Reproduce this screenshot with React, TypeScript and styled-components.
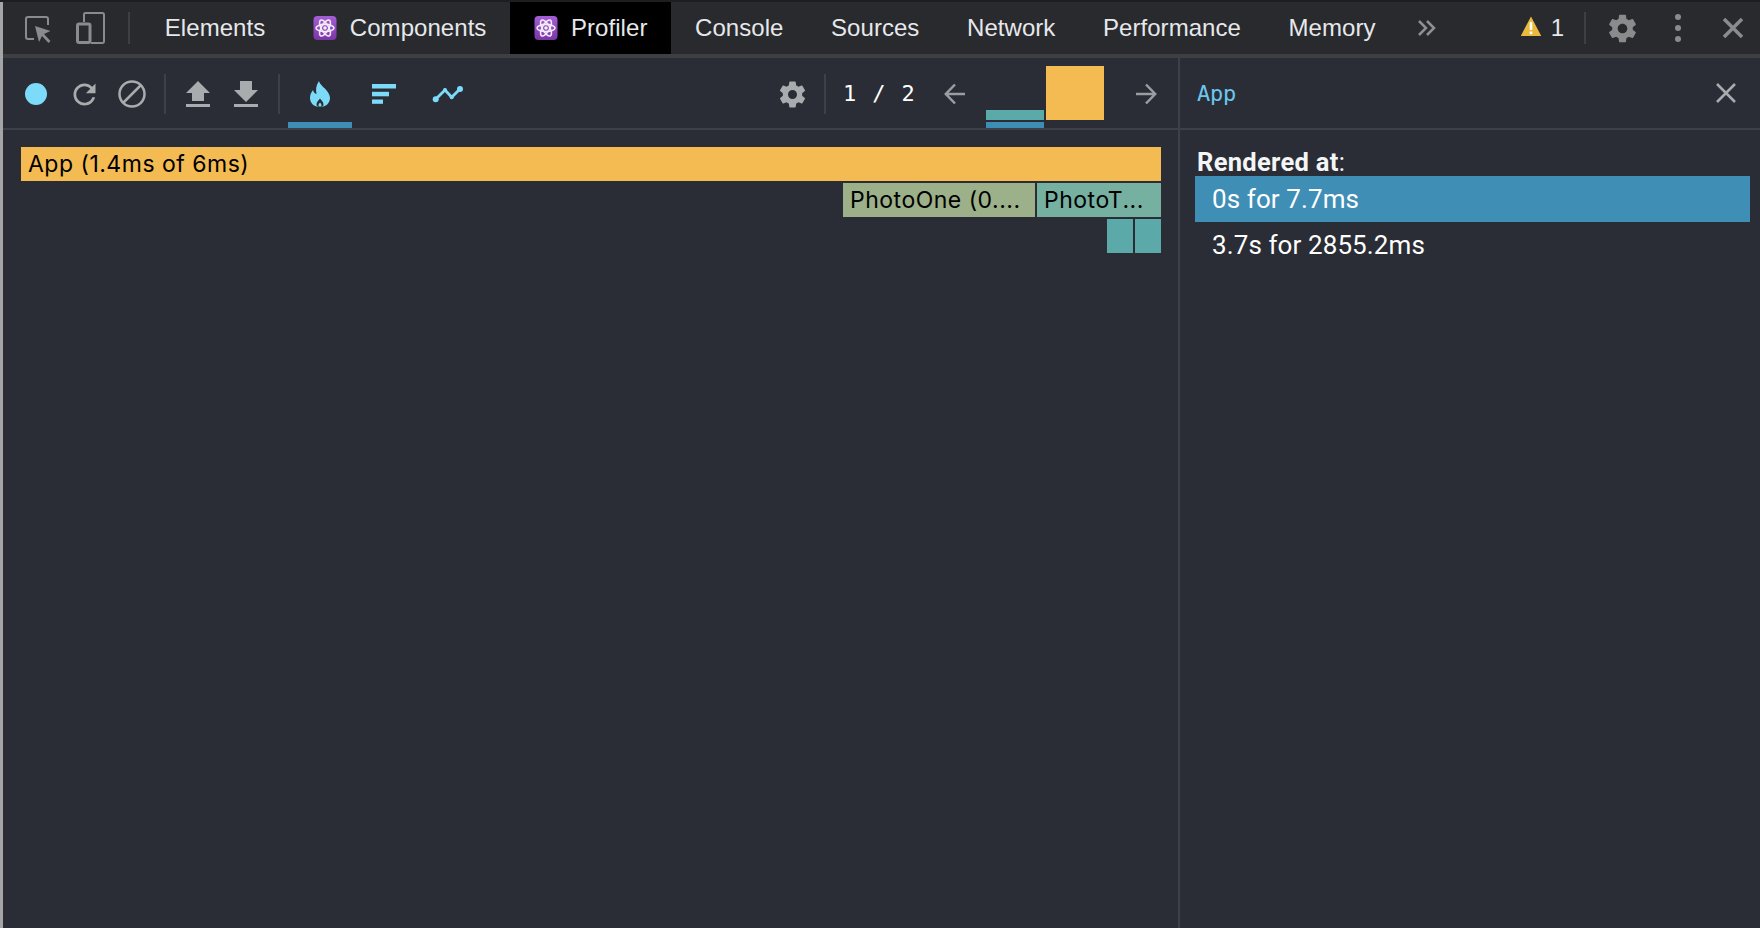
import React from "react";
import styled, { createGlobalStyle } from "styled-components";

const Global = createGlobalStyle`
  html, body { margin: 0; padding: 0; background: #2a2d35; overflow: hidden; }
  * { box-sizing: border-box; }
`;

const Page = styled.div`
  width: 1760px;
  height: 928px;
  display: flex;
  flex-direction: column;
  background: #1d1e20;
  padding-top: 2px;
`;
const Frame = styled.div`
  flex: 1;
  min-height: 0;
  display: flex;
  flex-direction: column;
  border-left: 3px solid #a4a5a7;
`;
const TabBar = styled.div`
  height: 56px;
  flex: none;
  display: flex;
  align-items: stretch;
  padding-left: 7px;
  background: #292a2d;
  border-bottom: 4px solid #3d3f43;
`;
const Slot = styled.div<{ $w: number }>`
  width: ${(p) => p.$w}px;
  flex: none;
  display: flex;
  align-items: center;
  justify-content: center;
`;
const ToolSlot = styled(Slot)`
  padding-top: 2px;
`;
const TabSep = styled.div`
  width: 2px;
  height: 32px;
  align-self: center;
  background: #3d3f43;
  margin: 0 11px 0 10px;
  flex: none;
`;
const Tab = styled.div<{ $active?: boolean }>`
  display: flex;
  align-items: center;
  gap: 13px;
  padding: 0 23.8px;
  background: ${(p) => (p.$active ? "#000" : "transparent")};
  color: #e6e8eb;
  font: 24px "Liberation Sans", Arial, sans-serif;
  letter-spacing: 0.05px;
  white-space: nowrap;
  flex: none;
`;
const Grow = styled.div`
  flex: 1;
`;
const WarnGroup = styled.div`
  display: flex;
  align-items: center;
  gap: 10px;
  color: #e6e8eb;
  font: 24px "Liberation Sans", Arial, sans-serif;
`;
const RightTabSep = styled.div`
  width: 2px;
  height: 32px;
  align-self: center;
  background: #3d3f43;
  margin: 0 8px 0 20px;
  flex: none;
`;
const Body = styled.div`
  flex: 1;
  min-height: 0;
  display: flex;
  background: #2a2d35;
`;
const LeftPane = styled.div`
  width: 1177px;
  flex: none;
  display: flex;
  flex-direction: column;
  border-right: 2px solid #3d4047;
`;
const RightPane = styled.div`
  flex: 1;
  min-width: 0;
  display: flex;
  flex-direction: column;
`;
const Toolbar = styled.div`
  height: 72px;
  flex: none;
  display: flex;
  align-items: stretch;
  padding-left: 9px;
  border-bottom: 2px solid #3d4047;
`;
const ToolSep = styled.div`
  width: 2px;
  height: 40px;
  margin: 16px 8px 0;
  background: #3d4047;
  flex: none;
`;
const ViewTab = styled.div<{ $active?: boolean }>`
  width: 64px;
  flex: none;
  display: flex;
  align-items: center;
  justify-content: center;
  padding-top: 8px;
  border-bottom: 6px solid ${(p) => (p.$active ? "#3d8eb5" : "transparent")};
`;
const Counter = styled.div`
  margin-left: 9px;
  width: 88px;
  align-self: center;
  color: #fff;
  font: 22px "DejaVu Sans Mono", monospace;
  letter-spacing: -0.6px;
  word-spacing: 4px;
  white-space: pre;
`;
const Commits = styled.div`
  display: flex;
  gap: 2px;
  margin: 0 18px 0 7px;
  flex: none;
`;
const Commit = styled.div<{ $selected?: boolean }>`
  width: 58px;
  display: flex;
  flex-direction: column;
  justify-content: flex-end;
  border-bottom: 6px solid ${(p) => (p.$selected ? "#3d8eb5" : "transparent")};
  padding-bottom: 2px;
`;
const CommitBar = styled.div<{ $h: number; $c: string }>`
  height: ${(p) => p.$h}px;
  background: ${(p) => p.$c};
`;
const Chart = styled.div`
  flex: 1;
  padding: 17px 17px 0 18px;
  display: flex;
  flex-direction: column;
  gap: 2px;
`;
const FlameRow = styled.div`
  display: flex;
  justify-content: flex-end;
  gap: 2px;
`;
const Flame = styled.div<{ $w: number; $c: string }>`
  width: ${(p) => p.$w}px;
  height: 34px;
  flex: none;
  background: ${(p) => p.$c};
  color: #000;
  padding-left: 7px;
  font: 23px/34px Inter, "Liberation Sans", sans-serif;
  letter-spacing: 0.5px;
  white-space: nowrap;
  overflow: hidden;
`;
const PanelHead = styled.div`
  height: 72px;
  flex: none;
  display: flex;
  align-items: center;
  justify-content: space-between;
  padding: 0 24px 0 17px;
  border-bottom: 2px solid #3d4047;
  color: #6cc7ee;
  font: 22px "DejaVu Sans Mono", monospace;
  letter-spacing: -0.3px;
`;
const PanelBody = styled.div`
  padding: 19px 10px 0 15px;
  display: flex;
  flex-direction: column;
`;
const Label = styled.div`
  color: #f4f5f6;
  font: 700 25.5px/27px Roboto, sans-serif;
  letter-spacing: 0.3px;
  padding-left: 2px;
`;
const Colon = styled.span`
  font-weight: 400;
`;
const Rendered = styled.div<{ $selected?: boolean }>`
  height: 46px;
  display: flex;
  align-items: center;
  padding-left: 17px;
  color: #fff;
  background: ${(p) => (p.$selected ? "#3f8eb6" : "transparent")};
  font: 26px Roboto, sans-serif;
  letter-spacing: 0.1px;
`;
const InspectSvg = styled.svg`
  margin: 3px 0 0 4px;
`;
const WarnSvg = styled.svg`
  margin-bottom: 4px;
`;

const gear =
  "M19.43 12.98c.04-.32.07-.64.07-.98s-.03-.66-.07-.98l2.11-1.65c.19-.15.24-.42.12-.64l-2-3.46c-.12-.22-.39-.3-.61-.22l-2.49 1c-.52-.4-1.08-.73-1.69-.98l-.38-2.65C14.46 2.18 14.25 2 14 2h-4c-.25 0-.46.18-.49.42l-.38 2.65c-.61.25-1.17.59-1.69.98l-2.49-1c-.23-.09-.49 0-.61.22l-2 3.46c-.13.22-.07.49.12.64l2.11 1.65c-.04.32-.07.65-.07.98s.03.66.07.98l-2.11 1.65c-.19.15-.24.42-.12.64l2 3.46c.12.22.39.3.61.22l2.49-1c.52.4 1.08.73 1.69.98l.38 2.65c.03.24.24.42.49.42h4c.25 0 .46-.18.49-.42l.38-2.65c.61-.25 1.17-.59 1.69-.98l2.49 1c.23.09.49 0 .61-.22l2-3.46c.12-.22.07-.49-.12-.64l-2.11-1.65zM12 15.5c-1.93 0-3.5-1.57-3.5-3.5s1.57-3.5 3.5-3.5 3.5 1.57 3.5 3.5-1.57 3.5-3.5 3.5z";

const Gear = ({ size, color }: { size: number; color: string }) => (
  <svg width={size} height={size} viewBox="0 0 24 24">
    <path d={gear} fill={color} />
  </svg>
);
const Atom = () => (
  <svg width="24" height="24" viewBox="0 0 24 24">
    <defs>
      <linearGradient id="atomBg" x1="0" y1="0" x2="0" y2="1">
        <stop offset="0" stopColor="#a45fd6" />
        <stop offset="1" stopColor="#7a35a6" />
      </linearGradient>
    </defs>
    <rect x="0.5" y="0" width="23" height="24" rx="4" fill="url(#atomBg)" />
    <g fill="none" stroke="#f3ebf8" strokeWidth="1.6">
      <ellipse cx="12" cy="12" rx="9" ry="3.6" />
      <ellipse cx="12" cy="12" rx="9" ry="3.6" transform="rotate(60 12 12)" />
      <ellipse cx="12" cy="12" rx="9" ry="3.6" transform="rotate(120 12 12)" />
    </g>
    <circle cx="12" cy="12" r="1.8" fill="#f3ebf8" />
  </svg>
);
const Inspect = () => (
  <InspectSvg width="28" height="28" viewBox="0 0 28 28">
    <path d="M9 23H3a2 2 0 0 1-2-2V3a2 2 0 0 1 2-2h18a2 2 0 0 1 2 2v6" fill="none" stroke="#8a8b8d" strokeWidth="2" />
    <path d="M10 10L25.5 15 19 18l6.5 7-2 2L17 20l-3 6z" fill="#8a8b8d" />
  </InspectSvg>
);
const Device = () => (
  <svg width="30" height="32" viewBox="0 0 30 32">
    <path d="M8 10V2.5A1.5 1.5 0 0 1 9.5 1h17A1.5 1.5 0 0 1 28 2.5v27a1.5 1.5 0 0 1-1.500 1.500H15" fill="none" stroke="#8a8b8d" strokeWidth="2" />
    <rect x="1.500" y="12" width="12.500" height="18.500" rx="1.500" fill="none" stroke="#8a8b8d" strokeWidth="3" />
  </svg>
);
const Chevrons = () => (
  <svg width="18" height="16" viewBox="0 0 18 16" fill="none" stroke="#8f9092" strokeWidth="2.5">
    <path d="M1 1l7 7-7 7M9 1l7 7-7 7" />
  </svg>
);
const Warn = () => (
  <WarnSvg width="20" height="20" viewBox="0 0 20 20">
    <path d="M10 0.500L20 19.500a.5.5 0 0 1 0 .5H0a.5.5 0 0 1 0-.5z" fill="#ecb93e" />
    <rect x="8.700" y="6" width="2.600" height="8" fill="#fff" />
    <rect x="8.700" y="15.500" width="2.600" height="2.600" fill="#fff" />
  </WarnSvg>
);
const Dots = () => (
  <svg width="6" height="28" viewBox="0 0 6 28" fill="#8a8b8d">
    <circle cx="3" cy="3" r="3" />
    <circle cx="3" cy="14" r="3" />
    <circle cx="3" cy="25" r="3" />
  </svg>
);
const Cross = ({ size, color, sw }: { size: number; color: string; sw: number }) => (
  <svg width={size} height={size} viewBox={`0 0 ${size} ${size}`} fill="none" stroke={color} strokeWidth={sw}>
    <path d={`M1 1L${size - 1} ${size - 1}M${size - 1} 1L1 ${size - 1}`} />
  </svg>
);
const Record = () => (
  <svg width="22" height="22" viewBox="0 0 22 22">
    <circle cx="11" cy="11" r="11" fill="#7ddbfa" />
  </svg>
);
const Reload = () => (
  <svg width="33" height="33" viewBox="0 0 24 24">
    <path
      fill="#a9acaf"
      d="M17.65 6.35C16.2 4.9 14.21 4 12 4c-4.42 0-7.99 3.58-7.99 8s3.57 8 7.99 8c3.73 0 6.84-2.55 7.73-6h-2.08c-.82 2.33-3.04 4-5.65 4-3.31 0-6-2.69-6-6s2.69-6 6-6c1.66 0 3.14.69 4.22 1.78L13 11h7V4l-2.35 2.35z"
    />
  </svg>
);
const Stop = () => (
  <svg width="28" height="28" viewBox="0 0 28 28" fill="none" stroke="#a9acaf" strokeWidth="2.500">
    <circle cx="14" cy="14" r="12.500" />
    <path d="M5.500 22.500L22.500 5.500" />
  </svg>
);
const Upload = () => (
  <svg width="24" height="26" viewBox="0 0 24 26" fill="#a9acaf">
    <path d="M12 0L24 12H18V20H6V12H0Z" />
    <rect y="23" width="24" height="3" />
  </svg>
);
const Download = () => (
  <svg width="24" height="26" viewBox="0 0 24 26" fill="#a9acaf">
    <path d="M6 0H18V9H24L12 21 0 9H6Z" />
    <rect y="23" width="24" height="3" />
  </svg>
);
const FlameIcon = () => (
  <svg width="20" height="26" viewBox="0 0 20 26">
    <path
      fill="#7ddbfa"
      d="M9 0C10 4 14 6 17 10C19.500 13 20 16 20 17C20 22 16 26 10 26C4 26 0 22 0 17C0 14 1 11.500 3 9C3.500 11 4.500 12.500 6.500 13C5.500 9 6 4 9 0Z"
    />
    <path fill="#2a2d35" d="M10 17.500C11.500 19.500 13.500 21 13.500 23.500C13.500 25 12.500 26 10 26C7.500 26 6.500 25 6.500 23.500C6.500 21 8.500 19.500 10 17.500Z" />
    <path fill="#7ddbfa" d="M10 21.500C10.800 22.500 11.500 23.200 11.500 24.200C11.500 25 10.800 25.500 10 25.500C9.200 25.500 8.500 25 8.500 24.200C8.500 23.200 9.200 22.500 10 21.500Z" />
  </svg>
);
const Ranked = () => (
  <svg width="24" height="20" viewBox="0 0 24 20" fill="#7ddbfa">
    <rect width="24" height="4.500" />
    <rect y="7.800" width="17" height="4.500" />
    <rect y="15.500" width="11" height="4.300" />
  </svg>
);
const Trend = () => (
  <svg width="32" height="20" viewBox="0 0 32 20">
    <path d="M3.700 15.300L13 6 19.700 13.300 28 5" fill="none" stroke="#7ddbfa" strokeWidth="2.800" />
    <circle cx="3.700" cy="15.300" r="3" fill="#7ddbfa" />
    <circle cx="13" cy="6" r="2" fill="#7ddbfa" />
    <circle cx="19.700" cy="13.300" r="2" fill="#7ddbfa" />
    <circle cx="28" cy="5" r="3" fill="#7ddbfa" />
  </svg>
);
const ArrowLeft = () => (
  <svg width="22" height="22" viewBox="0 0 22 22" fill="none" stroke="#9b9da1" strokeWidth="2.500">
    <path d="M21 11H2M11 1.500L1.800 11l9.200 9.500" />
  </svg>
);
const ArrowRight = () => (
  <svg width="22" height="22" viewBox="0 0 22 22" fill="none" stroke="#9b9da1" strokeWidth="2.500">
    <path d="M1 11H20M11 1.500L20.200 11 11 20.500" />
  </svg>
);

export default function App() {
  return (
    <Page>
      <Global />
      <Frame>
        <TabBar>
          <Slot $w={54}><Inspect /></Slot>
          <Slot $w={54}><Device /></Slot>
          <TabSep />
          <Tab>Elements</Tab>
          <Tab><Atom />Components</Tab>
          <Tab $active><Atom />Profiler</Tab>
          <Tab>Console</Tab>
          <Tab>Sources</Tab>
          <Tab>Network</Tab>
          <Tab>Performance</Tab>
          <Tab>Memory</Tab>
          <Slot $w={56}><Chevrons /></Slot>
          <Grow />
          <WarnGroup><Warn />1</WarnGroup>
          <RightTabSep />
          <Slot $w={56}><Gear size={33} color="#8a8b8d" /></Slot>
          <Slot $w={56}><Dots /></Slot>
          <Slot $w={54}><Cross size={20} color="#8a8b8d" sw={3.5} /></Slot>
        </TabBar>
        <Body>
          <LeftPane>
            <Toolbar>
              <ToolSlot $w={48}><Record /></ToolSlot>
              <ToolSlot $w={48}><Reload /></ToolSlot>
              <ToolSlot $w={48}><Stop /></ToolSlot>
              <ToolSep />
              <ToolSlot $w={48}><Upload /></ToolSlot>
              <ToolSlot $w={48}><Download /></ToolSlot>
              <ToolSep />
              <ViewTab $active><FlameIcon /></ViewTab>
              <ViewTab><Ranked /></ViewTab>
              <ViewTab><Trend /></ViewTab>
              <Grow />
              <ToolSlot $w={48}><Gear size={31} color="#a9acaf" /></ToolSlot>
              <ToolSep />
              <Counter>1 / 2</Counter>
              <ToolSlot $w={48}><ArrowLeft /></ToolSlot>
              <Commits>
                <Commit $selected><CommitBar $h={10} $c="#5ca9a9" /></Commit>
                <Commit><CommitBar $h={54} $c="#f4bb53" /></Commit>
              </Commits>
              <ToolSlot $w={48}><ArrowRight /></ToolSlot>
              <Slot $w={8} />
            </Toolbar>
            <Chart>
              <FlameRow>
                <Flame $w={1140} $c="#f4bb53">App (1.4ms of 6ms)</Flame>
              </FlameRow>
              <FlameRow>
                <Flame $w={192} $c="#9cb089">PhotoOne (0....</Flame>
                <Flame $w={124} $c="#76b0a0">PhotoT...</Flame>
              </FlameRow>
              <FlameRow>
                <Flame $w={26} $c="#5ca9a9" />
                <Flame $w={26} $c="#5ca9a9" />
              </FlameRow>
            </Chart>
          </LeftPane>
          <RightPane>
            <PanelHead>
              App
              <Cross size={20} color="#a9acaf" sw={2.5} />
            </PanelHead>
            <PanelBody>
              <Label>Rendered at<Colon>:</Colon></Label>
              <Rendered $selected>0s for 7.7ms</Rendered>
              <Rendered>3.7s for 2855.2ms</Rendered>
            </PanelBody>
          </RightPane>
        </Body>
      </Frame>
    </Page>
  );
}
